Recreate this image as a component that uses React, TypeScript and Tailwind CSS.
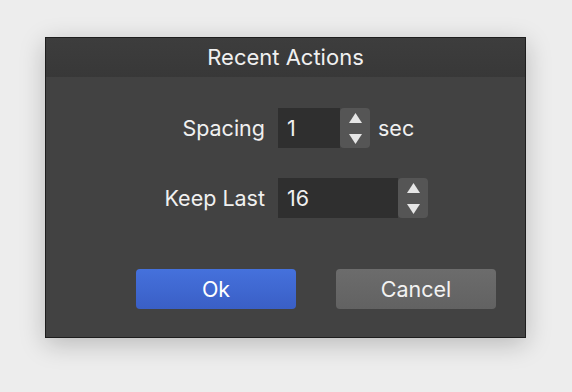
import React from 'react';

function Stepper() {
  return (
    <div className="flex h-full w-[30px] flex-col items-center justify-center gap-[11px] rounded-[4px] bg-[#555555]">
      <svg width="13" height="10" viewBox="0 0 13 10">
        <path d="M6.5 0 L13 10 L0 10 Z" fill="#e6e6e6" />
      </svg>
      <svg width="13" height="10" viewBox="0 0 13 10">
        <path d="M0 0 L13 0 L6.5 10 Z" fill="#e6e6e6" />
      </svg>
    </div>
  );
}

export default function App() {
  return (
    <div
      className="h-[392px] w-[572px] bg-[#ededed] pl-[45px] pt-[37px]"
      style={{ fontFamily: 'Inter, "Liberation Sans", sans-serif' }}
    >
      <div className="flex h-[301px] w-[481px] flex-col border border-[#1e1e1e] bg-[#424242] shadow-[0_6px_24px_rgba(0,0,0,0.22)]">
        {/* title bar */}
        <div className="flex h-[39px] items-center justify-center bg-gradient-to-b from-[#3d3d3d] to-[#383838] text-[22px] text-[#f0f0f0]">
          Recent Actions
        </div>

        {/* fields */}
        <div className="flex flex-col gap-[30px] pt-[31px] text-[21.5px] text-[#f0f0f0]">
          <div className="flex h-[40px] items-center">
            <div className="w-[219px] text-right">Spacing</div>
            <div className="ml-[13px] flex h-full">
              <div className="flex w-[62px] items-center bg-[#2f2f2f] pl-[9px]">1</div>
              <Stepper />
            </div>
            <div className="ml-[8px]">sec</div>
          </div>
          <div className="flex h-[40px] items-center">
            <div className="w-[219px] text-right">Keep Last</div>
            <div className="ml-[13px] flex h-full">
              <div className="flex w-[120px] items-center bg-[#2f2f2f] pl-[9px]">16</div>
              <Stepper />
            </div>
          </div>
        </div>

        {/* buttons */}
        <div className="mt-[51px] flex gap-[40px] pl-[90px] text-[21.5px] text-white">
          <button className="flex h-[40px] w-[160px] items-center justify-center rounded-[4px] bg-gradient-to-b from-[#4571dc] to-[#3a5fc6]">
            Ok
          </button>
          <button className="flex h-[40px] w-[160px] items-center justify-center rounded-[4px] bg-gradient-to-b from-[#6c6c6c] to-[#626262] text-[#f2f2f2]">
            Cancel
          </button>
        </div>
      </div>
    </div>
  );
}
